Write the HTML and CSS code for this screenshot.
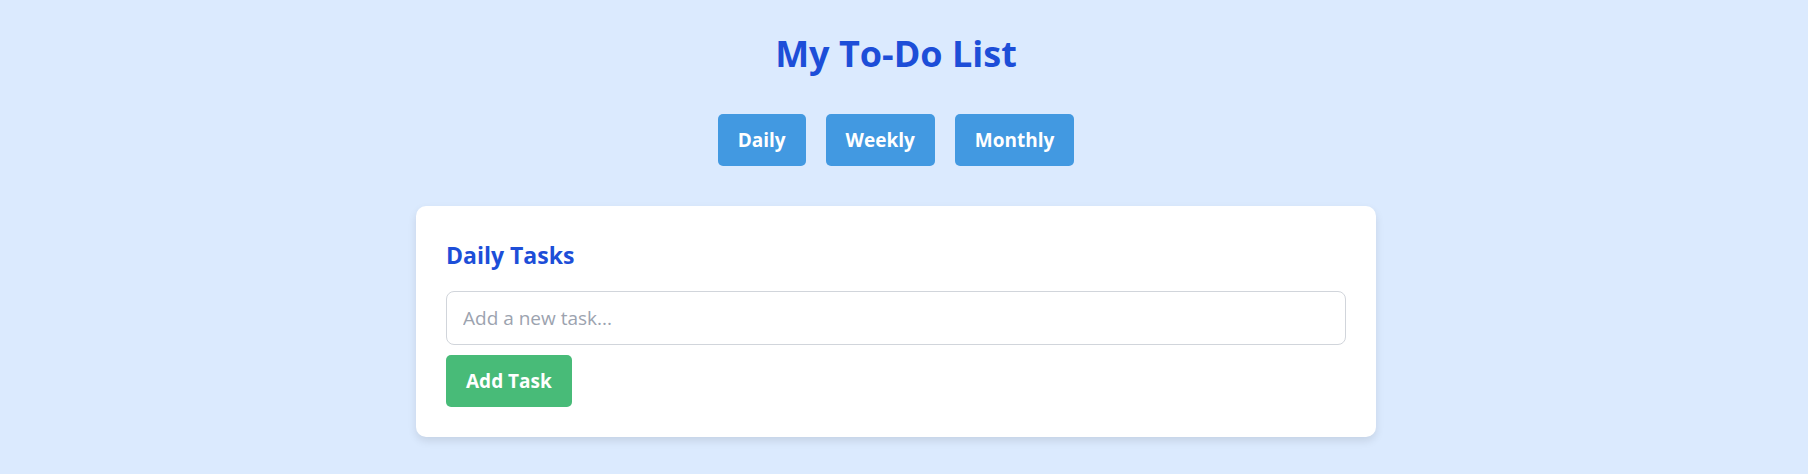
FILE: index.html
```html
<!DOCTYPE html>
<html lang="en">
<head>
<meta charset="utf-8">
<title>My To-Do List</title>
<link rel="stylesheet" href="styles.css">
</head>
<body>
<div class="page">
  <h1 class="title">My To-Do List</h1>
  <div class="tabs">
    <button class="tab">Daily</button>
    <button class="tab">Weekly</button>
    <button class="tab">Monthly</button>
  </div>
  <section class="card">
    <h2 class="card-title">Daily Tasks</h2>
    <input class="task-input" type="text" placeholder="Add a new task...">
    <button class="add-btn">Add Task</button>
  </section>
</div>
</body>
</html>
```

FILE: styles.css
```css
* { box-sizing: border-box; }
html, body {
  margin: 0;
  padding: 0;
  background: #dbeafe;
  font-family: "Open Sans", "Noto Sans", sans-serif;
}
.page {
  margin-right: 16px;
  padding: 29px 0 37px;
  display: flex;
  flex-direction: column;
  align-items: center;
}
.title {
  margin: 0;
  font-size: 36px;
  line-height: 50px;
  font-weight: 700;
  color: #1d4ed8;
}
.tabs {
  display: flex;
  gap: 20px;
  margin-top: 35px;
}
.tab {
  font-family: inherit;
  font-size: 19px;
  font-weight: 700;
  color: #fff;
  background: #4299e1;
  border: none;
  border-radius: 5px;
  height: 52px;
  padding: 0 20px;
}
.card {
  margin-top: 40px;
  width: 960px;
  background: #fff;
  border-radius: 10px;
  box-shadow: 0 4px 8px rgba(0, 0, 0, 0.1);
  padding: 31px 30px 30px;
  display: flex;
  flex-direction: column;
  align-items: flex-start;
}
.card-title {
  margin: 0 0 18px;
  font-size: 23px;
  line-height: 36px;
  font-weight: 700;
  color: #1d4ed8;
}
.task-input {
  width: 100%;
  height: 54px;
  border: 1px solid #d1d5db;
  border-radius: 8px;
  padding: 0 16px;
  font-family: inherit;
  font-size: 19px;
  color: #111827;
  outline: none;
}
.task-input::placeholder { color: #9ca3af; }
.add-btn {
  margin-top: 10px;
  font-family: inherit;
  font-size: 19px;
  font-weight: 700;
  color: #fff;
  background: #48bb78;
  border: none;
  border-radius: 5px;
  height: 52px;
  padding: 0 20px;
}
```
